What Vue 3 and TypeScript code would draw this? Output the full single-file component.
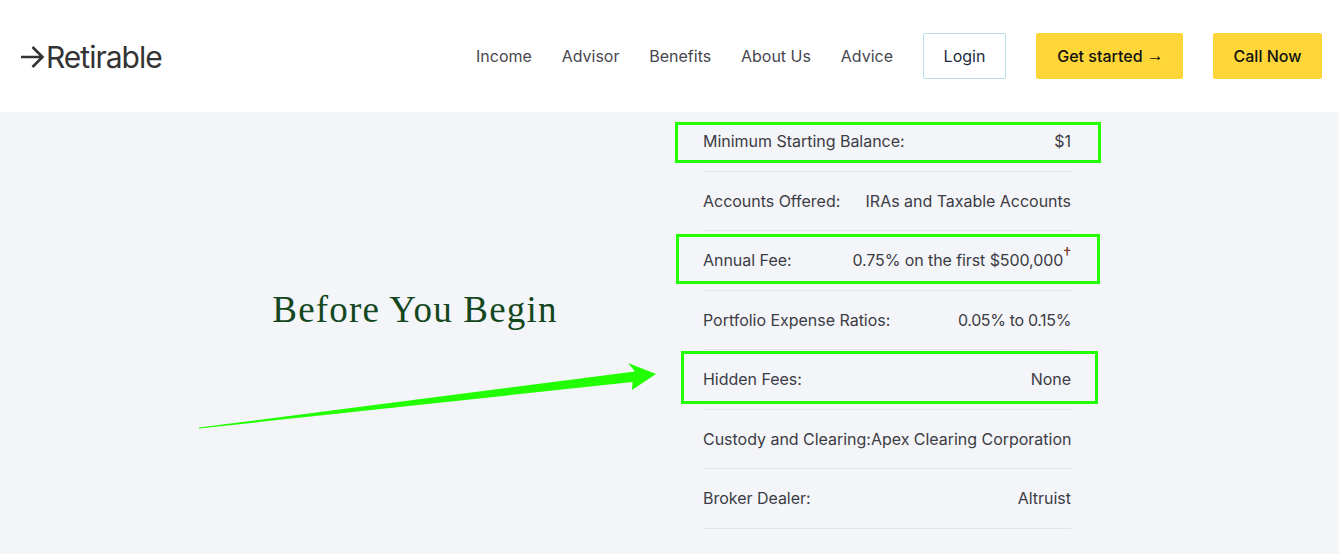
<template>
  <div class="page">
    <header class="topbar">
      <a class="logo" href="#">
        <svg class="logo-arrow" viewBox="0 0 25 22" width="25" height="22" fill="none" aria-hidden="true">
          <path d="M1 11H22.500M12.500 1L22.500 11L12.500 21" stroke="#333" stroke-width="2.600" />
        </svg>
        <span>Retirable</span>
      </a>
      <nav class="nav">
        <a v-for="item in navItems" :key="item" href="#">{{ item }}</a>
      </nav>
      <a class="btn btn-login" href="#">Login</a>
      <a class="btn btn-yellow btn-start" href="#">Get started <span class="next">→</span></a>
      <a class="btn btn-yellow btn-call" href="#">Call Now</a>
    </header>

    <main class="content">
      <div class="intro">
        <h2>Before You Begin</h2>
      </div>
      <div class="facts">
        <div v-for="row in rows" :key="row.label" class="fact">
          <span>{{ row.label }}</span>
          <span :class="{ tight: row.tight, snug: row.dagger }">{{ row.value }}<sup v-if="row.dagger">†</sup></span>
        </div>
      </div>

      <!-- annotations drawn on top of the page -->
      <i class="mark mark-a"></i>
      <i class="mark mark-b"></i>
      <i class="mark mark-c"></i>
      <svg class="pointer" viewBox="0 0 470 80" width="470" height="80" aria-hidden="true">
        <path d="M0 70.500L436 14.500L429 6L457 17L433 33L433.500 25L0 71.500Z" fill="#22ff00" />
      </svg>
    </main>
  </div>
</template>

<script setup lang="ts">
interface Row {
  label: string
  value: string
  dagger?: boolean
  tight?: boolean
}

const navItems = ["Income", "Advisor", "Benefits", "About Us", "Advice"]

const rows: Row[] = [
  { label: "Minimum Starting Balance:", value: "$1" },
  { label: "Accounts Offered:", value: "IRAs and Taxable Accounts" },
  { label: "Annual Fee:", value: "0.75% on the first $500,000", dagger: true },
  { label: "Portfolio Expense Ratios:", value: "0.05% to 0.15%", tight: true },
  { label: "Hidden Fees:", value: "None" },
  { label: "Custody and Clearing:", value: "Apex Clearing Corporation" },
  { label: "Broker Dealer:", value: "Altruist" },
]
</script>

<style>
html,
body {
  margin: 0;
  background: #f3f5f9;
}
</style>

<style scoped>
.page {
  height: 554px;
  overflow: hidden;
  background: #f3f5f9;
  font-family: Inter, "Liberation Sans", sans-serif;
  font-size: 16px;
  color: #3c3c44;
}

.topbar {
  display: flex;
  align-items: center;
  height: 112px;
  padding: 0 17px 0 20px;
  box-sizing: border-box;
  background: #fff;
}

.topbar a {
  text-decoration: none;
}

.logo {
  display: flex;
  align-items: center;
  color: #333;
  font-size: 30px;
  line-height: 36px;
  letter-spacing: -1px;
  margin-right: auto;
  padding-top: 2px;
}

.logo-arrow {
  margin-right: 1px;
}

.nav {
  display: flex;
  gap: 29.8px;
  margin-right: 30px;
}

.nav a {
  color: #47474f;
}

.btn {
  display: flex;
  align-items: center;
  justify-content: center;
  height: 46px;
  box-sizing: border-box;
  border-radius: 2px;
  font-weight: 500;
  color: #111;
  white-space: pre;
}

.btn-login {
  width: 83px;
  margin-right: 30px;
  border: 1px solid #b9dce8;
  font-weight: 400;
  color: #1c2b3c;
}

.btn-yellow {
  background: #ffd638;
}

.btn-start {
  width: 147px;
  margin-right: 30px;
  padding-left: 2px;
}

.next {
  font-family: "Liberation Sans", sans-serif;
  font-size: 17px;
}

.btn-call {
  width: 109px;
}

.content {
  position: relative;
  display: flex;
  align-items: flex-start;
}

.intro {
  width: 554px;
  margin-left: 138px;
  padding-top: 173px;
  text-align: center;
}

.intro h2 {
  margin: 0;
  font-family: "Liberation Serif", serif;
  font-size: 37px;
  line-height: 50px;
  font-weight: 400;
  letter-spacing: 1.2px;
  color: #14471e;
}

.facts {
  width: 368px;
  margin-left: 11px;
}

.fact {
  display: flex;
  justify-content: space-between;
  height: 59.4px;
  padding-top: 19px;
  box-sizing: border-box;
  line-height: 20px;
  letter-spacing: -0.025px;
  white-space: nowrap;
  border-bottom: 1px solid #e3e5e9;
}

.fact:first-child,
.fact:last-child {
  height: 60px;
}

.tight {
  letter-spacing: -0.35px;
}

.snug {
  letter-spacing: -0.09px;
}

.fact sup {
  font-size: 16px;
  line-height: 0;
  vertical-align: 7px;
  color: #7a3b1e;
}

.mark {
  position: absolute;
  box-sizing: border-box;
  border: 3px solid #22ff00;
}

.mark-a {
  left: 675px;
  top: 10px;
  width: 426px;
  height: 41px;
}

.mark-b {
  left: 676px;
  top: 122px;
  width: 424px;
  height: 50px;
}

.mark-c {
  left: 681px;
  top: 239px;
  width: 417px;
  height: 53px;
}

.pointer {
  position: absolute;
  left: 199px;
  top: 245px;
}
</style>
